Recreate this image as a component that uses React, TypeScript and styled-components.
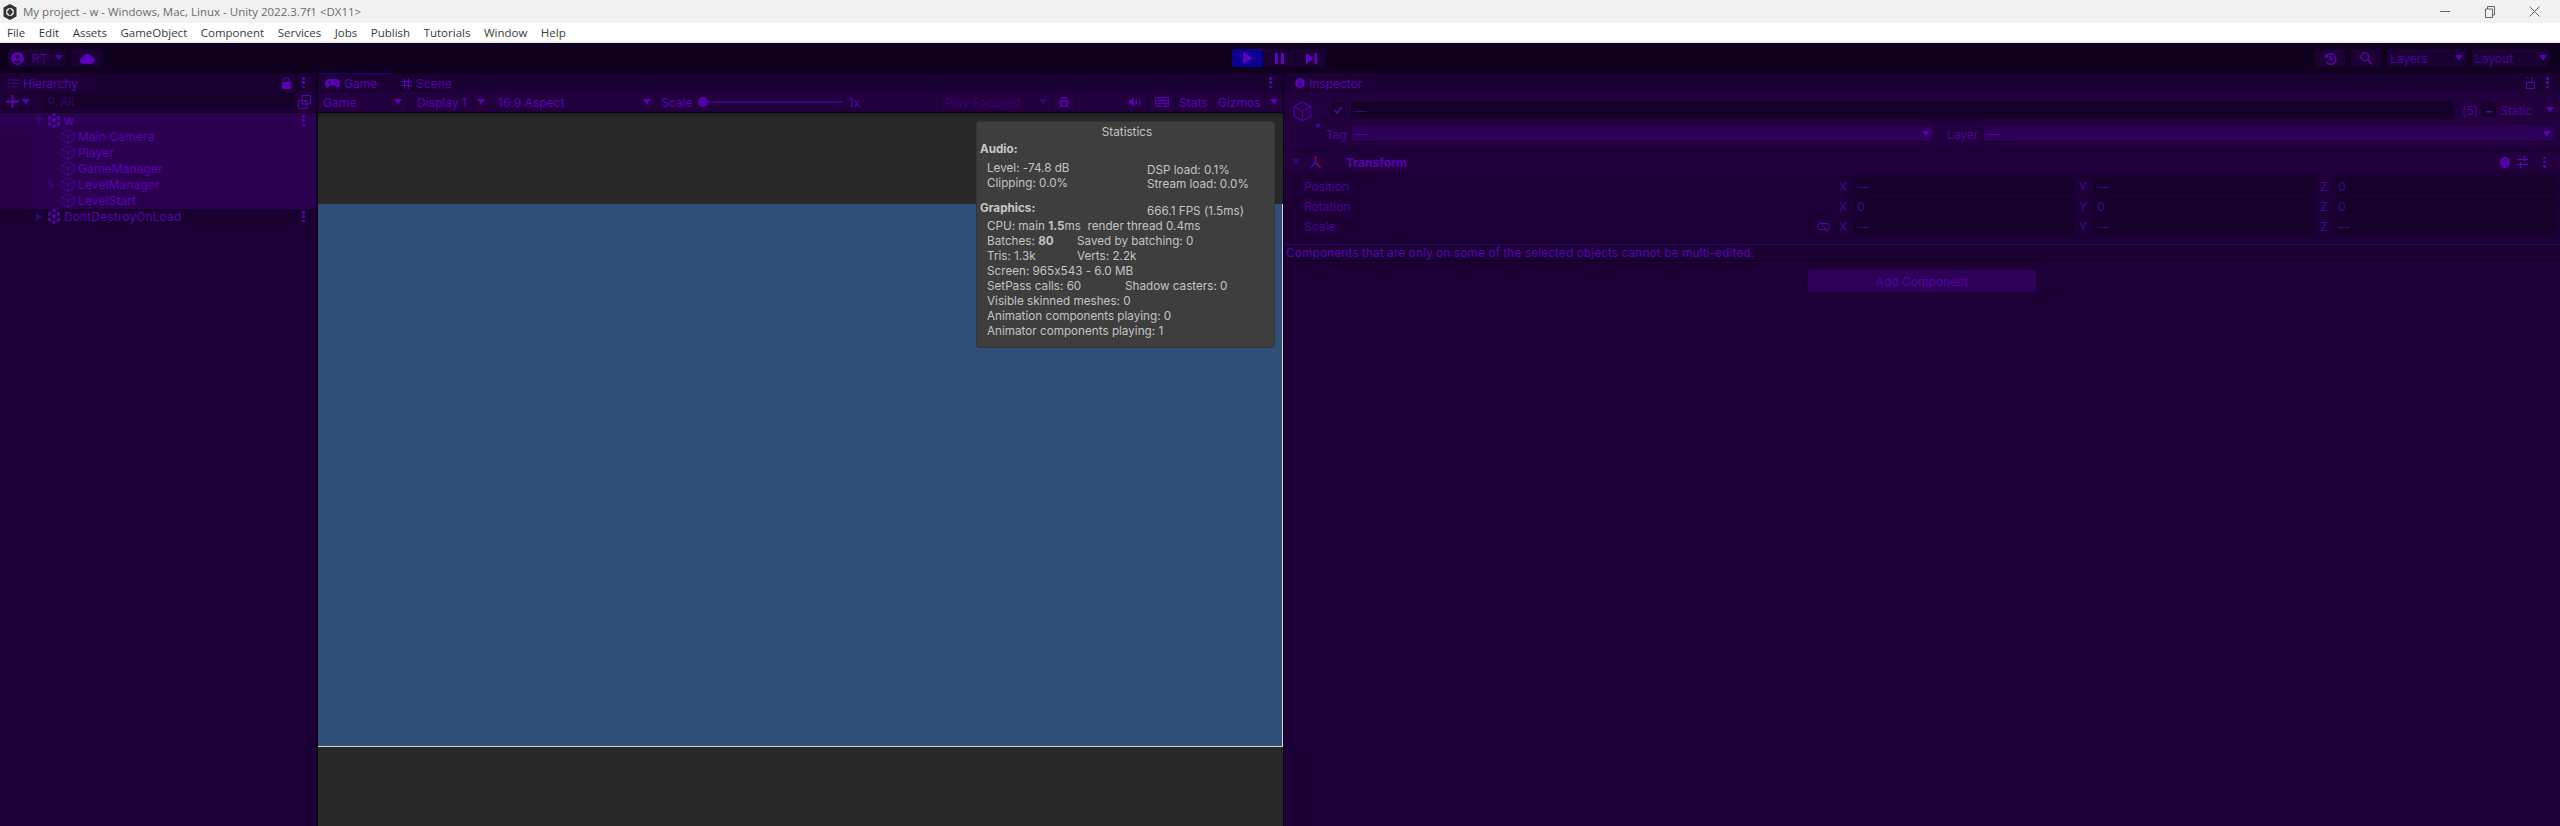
import React from "react";
import styled, { createGlobalStyle } from "styled-components";

const TEXT = "#5b00b6";
const DIM = "#4c009c";
const PANEL = "#1c0035";

const Global = createGlobalStyle`
  html, body { margin: 0; padding: 0; background: #10001f; }
  #root { width: 2560px; height: 826px; overflow: hidden; }
  * { box-sizing: border-box; }
`;

const Page = styled.div`
  width: 2560px; height: 826px; display: flex; flex-direction: column; overflow: hidden;
  font-family: Inter, "Liberation Sans", sans-serif; font-size: 12px; color: ${TEXT};
  font-feature-settings: "calt" 0;
`;
const TitleBar = styled.header`
  height: 23px; flex: none; background: #f2f2f2; display: flex; align-items: center; padding-left: 3px;
  font-family: "Open Sans", "Noto Sans", sans-serif; font-size: 11.5px; color: #6b6b6b;
`;
const TitleText = styled.span` margin-left: 6px; flex: 1; white-space: nowrap; `;
const WindowBtn = styled.span`
  width: 45px; height: 23px; display: flex; align-items: center; justify-content: center;
`;
const WindowBtns = styled.div` display: flex; margin-right: 3px; `;
const MenuBar = styled.nav`
  height: 20px; flex: none; background: #fff; border-bottom: 2px solid #f0f0f0; display: flex; align-items: center;
  padding-left: 7px; gap: 13.5px; font-family: "Open Sans", "Noto Sans", sans-serif; font-size: 11.5px; color: #3a3a3a;
`;
const MainToolbar = styled.div`
  height: 30px; flex: none; background: #0f001d; display: grid; grid-template-columns: 1fr auto 1fr; align-items: center;
  padding: 0 10px 0 8px;
`;
const ToolGroup = styled.div<{ $end?: boolean }>`
  display: flex; gap: 6px; align-items: center; justify-content: ${(p) => (p.$end ? "flex-end" : "flex-start")};
`;
const PlayGroup = styled.div` display: flex; gap: 1px; `;
const ToolBtn = styled.div<{ $w: number; $active?: boolean }>`
  width: ${(p) => p.$w}px; height: 18px; border-radius: 2px; display: flex; align-items: center; justify-content: center; gap: 5px;
  background: ${(p) => (p.$active ? "#0c0090" : "#1b0034")}; color: ${DIM};
`;
const ToolDrop = styled(ToolBtn)` justify-content: space-between; padding: 0 3px; `;
const Panels = styled.main`
  flex: 1; min-height: 0; display: flex; background: #0c0018;
`;
const Panel = styled.section<{ $w: number; $mr: number }>`
  width: ${(p) => p.$w}px; margin-right: ${(p) => p.$mr}px; flex: none; display: flex; flex-direction: column; background: ${PANEL};
`;
const TabStrip = styled.div`
  height: 19px; flex: none; background: #180030; display: flex; align-items: stretch; position: relative;
`;
const Tab = styled.div<{ $w: number; $pad?: number; $active?: boolean; $blue?: boolean }>`
  width: ${(p) => p.$w}px; display: flex; align-items: center; gap: 4px; padding-left: ${(p) => p.$pad ?? 7}px;
  background: ${(p) => (p.$active ? PANEL : "transparent")};
  border-top: 1px solid ${(p) => (p.$blue ? "#15008c" : "transparent")};
`;
const TabTools = styled.div`
  margin-left: auto; display: flex; align-items: center; gap: 11px; padding-right: 11px;
`;
const Bar = styled.div`
  height: 20.5px; flex: none; background: #22003e; border-bottom: 1px solid #12001f; display: flex; align-items: center;
`;
const HierBar = styled(Bar)` padding: 0 5px 0 6px; background: ${PANEL}; `;
const SearchField = styled.div`
  width: 251px; height: 15px; margin-left: 14px; background: #15002a; border-radius: 3px; display: flex; align-items: center; gap: 3px; padding-left: 4px; color: #3a0076;
`;
const Tree = styled.div` display: flex; flex-direction: column; `;
const TreeRow = styled.div<{ $kind: "scene" | "child" | "plain" }>`
  height: 16px; display: flex; align-items: center; padding-right: 11px; white-space: nowrap; position: relative;
  background: ${(p) =>
    p.$kind === "scene"
      ? "#2b0051"
      : p.$kind === "child"
      ? "linear-gradient(90deg,#27004a 32px,#2b0051 32px)"
      : "#190030"};
`;
const Caret = styled.span<{ $x: number; $open?: boolean }>`
  width: 0; height: 0; margin-left: ${(p) => p.$x}px; flex: none;
  ${(p) =>
    p.$open
      ? `border-left:4px solid transparent;border-right:4px solid transparent;border-top:7px solid #3b0077;`
      : `border-top:4px solid transparent;border-bottom:4px solid transparent;border-left:6px solid #3b0077;`}
`;
const Indent = styled.span<{ $x: number }>` width: ${(p) => p.$x}px; flex: none; `;
const RowName = styled.span<{ $bold?: boolean }>`
  margin-left: 3px; flex: 1; font-weight: ${(p) => (p.$bold ? 600 : 400)}; letter-spacing: .12px;
`;
const Game = styled.div` flex: 1; min-height: 0; background: #282828; position: relative; display: flex; flex-direction: column; `;
const Shade = styled.div` height: 91px; flex: none; background: linear-gradient(#1c1c1c 0, #282828 5px); `;
const GameImage = styled.div`
  height: 543px; flex: none; background: #2f4f78; border-right: 1px solid #d6d6d6; border-bottom: 1px solid #d6d6d6;
`;
const GBar = styled(Bar)` align-items: stretch; height: 21px; `;
const GItem = styled.div<{ $w: number; $pad?: number; $center?: boolean; $dim?: boolean }>`
  width: ${(p) => p.$w}px; flex: none; border-right: 1px solid #1a0030; display: flex; align-items: center;
  justify-content: ${(p) => (p.$center ? "center" : "space-between")}; padding: 0 ${(p) => p.$pad ?? 5}px;
  color: ${(p) => (p.$dim ? "#3b0078" : TEXT)}; white-space: nowrap;
`;
const SliderTrack = styled.span`
  flex: 1; height: 2px; background: #3a0076; margin: 0 6px 0 0; position: relative;
`;
const SliderKnob = styled.span`
  width: 10px; height: 10px; border-radius: 50%; background: #5500aa; margin: 0 0 0 6px; flex: none;
`;
const Stats = styled.aside`
  position: absolute; left: 658px; top: 8px; width: 299px; height: 227px; background: #3e3e3e; border-radius: 3px;
  border: 1px solid #343434; padding: 3px 0 0 3px; color: #c4c4c4; font-size: 11.7px; line-height: 15px;
`;
const StatTitle = styled.div` text-align: center; height: 15px; `;
const StatHeading = styled.div<{ $mt?: number }>` font-weight: 700; color: #c8c8c8; margin-top: ${(p) => p.$mt ?? 0}px; `;
const StatCols = styled.div<{ $mt: number; $h?: number }>` display: flex; margin-top: ${(p) => p.$mt}px; height: ${(p) => (p.$h ? `${p.$h}px` : "auto")}; `;
const StatLeft = styled.div` width: 167px; flex: none; `;
const StatRight = styled.div<{ $pt: number }>` padding-top: ${(p) => p.$pt}px; line-height: 14px; `;
const StatLine = styled.div` padding-left: 7px; display: flex; white-space: nowrap; `;
const StatCell = styled.span<{ $w: number }>` width: ${(p) => p.$w}px; flex: none; `;
const Insp = styled.div` display: flex; flex-direction: column; flex: 1; background: ${PANEL}; `;
const InspHead = styled.div`
  height: 59px; flex: none; background: #22003e; border-bottom: 1px solid #12001f; padding-top: 9px; display: flex; flex-direction: column; gap: 7px;
`;
const NameRow = styled.div` height: 18px; display: flex; align-items: center; padding-left: 9px; `;
const CubeSlot = styled.div` width: 38px; height: 18px; flex: none; position: relative; `;
const CubeArrow = styled.span`
  position: absolute; left: 22px; top: 23px; width: 0; height: 0;
  border-left: 3.5px solid transparent; border-right: 3.5px solid transparent; border-top: 5px solid ${DIM};
`;
const Check = styled.span`
  width: 14px; height: 14px; flex: none; background: #15002a; border-radius: 2px; display: flex; align-items: center; justify-content: center; font-size: 0;
`;
const NameField = styled.div`
  flex: 1; height: 18px; margin-left: 6px; background: #15002a; border-radius: 3px; color: #3a0076; padding-left: 3px; display: flex; align-items: center;
`;
const CountLabel = styled.span` width: 20px; margin-left: 8px; flex: none; color: ${DIM}; `;
const Dash = styled(Check)` color: ${TEXT}; font-size: 12px; font-weight: 700; `;
const StaticLabel = styled.span` margin-left: 4px; flex: none; width: 46px; color: ${DIM}; `;
const TagRow = styled.div` height: 16px; display: flex; align-items: center; padding-right: 6px; `;
const TagLabel = styled.span<{ $l: number; $w: number }>`
  margin-left: ${(p) => p.$l}px; width: ${(p) => p.$w}px; flex: none; color: ${DIM};
`;
const Select = styled.div<{ $w: number }>`
  width: ${(p) => p.$w}px; height: 16px; flex: none; background: #2d0057; border-radius: 2px; display: flex; align-items: center; justify-content: space-between; padding: 0 3px; border-bottom: 1px solid #1a0030;
`;
const CompHead = styled.div`
  height: 22px; flex: none; background: #22003e; border-bottom: 1px solid #1c0034; display: flex; align-items: center; padding: 1px 6px 0 0;
`;
const CompTitle = styled.span` margin-left: 24px; flex: 1; font-weight: 700; `;
const CompTools = styled.div` display: flex; gap: 7px; align-items: center; `;
const Vectors = styled.div` padding-top: 4px; display: flex; flex-direction: column; gap: 2px; height: 71px; flex: none; `;
const VRow = styled.div` height: 18px; display: flex; align-items: center; padding: 0 4px 0 20px; `;
const VLabel = styled.span` flex: 1; color: ${DIM}; `;
const LinkSlot = styled.span` width: 14px; margin-right: 8px; display: flex; `;
const Axis = styled.span` width: 15px; flex: none; color: ${DIM}; `;
const VField = styled.div<{ $w: number }>`
  width: ${(p) => p.$w}px; height: 18px; flex: none; background: #15002a; border-radius: 3px; padding-left: 3px; display: flex; align-items: center; color: #4a0096;
`;
const Notice = styled.div`
  height: 17px; flex: none; background: #1b0034; border-top: 1px solid #33006a; border-bottom: 1px solid #0c0018; padding-left: 2px; display: flex; align-items: center; white-space: nowrap; letter-spacing: .02px;
`;
const AddRow = styled.div` display: flex; justify-content: center; padding: 9px 0 0 0; `;
const AddBtn = styled.button`
  width: 228px; height: 22px; border: 0; border-radius: 2px; background: #2e0058; color: #5500ac; font: inherit;
`;
const DotsWrap = styled.span`
  width: 3px; height: 11px; display: flex; flex-direction: column; justify-content: space-between; flex: none;
`;
const DotMark = styled.i<{ $c?: string }>` width: 2.5px; height: 2.5px; border-radius: 50%; background: ${(p) => p.$c ?? TEXT}; display: block; `;

const Dots = ({ c }: { c?: string }) => (
  <DotsWrap><DotMark $c={c} /><DotMark $c={c} /><DotMark $c={c} /></DotsWrap>
);
const Tri = ({ c = TEXT, s = 8 }: { c?: string; s?: number }) => (
  <svg width={s} height={s * 0.7} viewBox="0 0 8 5.6"><path d="M0 0h8L4 5.6z" fill={c} /></svg>
);
const Cube = ({ s = 14, c = "#4c009c", w = 1 }: { s?: number; c?: string; w?: number }) => (
  <svg width={s} height={s * 1.1} viewBox="0 0 14 15.4" fill="none" stroke={c} strokeWidth={w}>
    <path d="M7 .8 13 4v7.4l-6 3.2-6-3.2V4zM1 4l6 3.4L13 4M7 7.4v7.2" />
  </svg>
);
const SceneIcon = () => (
  <svg width="14" height="15" viewBox="0 0 13 14" fill={TEXT}>
    <path d="M6.5 0 9 1.5 6.5 3 4 1.5zM1 3.500l2.500-1.200.3 3L1 7zM12 3.500 9.500 2.300l-.3 3L12 7zM1 8l2.700 1.500.3 3L1 11zM12 8 9.300 9.500l-.3 3L12 11zM6.500 14 4.500 12.800 6.500 10l2 2.800zM6.500 4.500 9 6.300 6.500 8.800 4 6.300z" />
  </svg>
);
const Logo = () => (
  <svg width="14" height="16" viewBox="0 0 14 16">
    <path d="M7 0 13.500 3.500v9L7 16 .5 12.500v-9z" fill="#333" />
    <circle cx="7" cy="8" r="4" fill="#ddd" />
    <path d="M7 4.500 10 8 7 11.500 4 8z" fill="#333" />
  </svg>
);
const Gamepad = () => (
  <svg width="15" height="9" viewBox="0 0 15 9" fill={TEXT}>
    <path d="M4 0h7a4 4 0 0 1 4 4.500c0 4-2.500 5-4.500 3L9.500 6.500h-4l-1 1c-2 2-4.500 1-4.500-3A4 4 0 0 1 4 0z" />
    <path d="M3 3.500h3M4.500 2v3M10 3h.8M11.500 4.500h.8" stroke={PANEL} strokeWidth="1" />
  </svg>
);
const Hash = () => (
  <svg width="11" height="11" viewBox="0 0 11 11" stroke={TEXT} strokeWidth="1" fill="none">
    <path d="M3.500 0v11M7.500 0v11M0 3.500h11M0 7.500h11" />
  </svg>
);
const ListIcon = () => (
  <svg width="11" height="9" viewBox="0 0 11 9" stroke={DIM} strokeWidth="1" fill="none">
    <path d="M0 1h2M3.500 1h7.500M0 4.500h2M3.500 4.500h7.500M0 8h2M3.500 8h7.500" />
  </svg>
);
const Lock = ({ open }: { open?: boolean }) => (
  <svg width="9" height="12" viewBox="0 0 9 12" fill={open ? "none" : TEXT} stroke={TEXT} strokeWidth="1">
    {open ? <path d="M1 1.500a2.500 2.500 0 0 1 5 0V5" /> : <path d="M2 5V3a2.500 2.500 0 0 1 5 0v2" fill="none" />}
    <rect x=".5" y="5.500" width="8" height="6" />
  </svg>
);
const Plus = () => (
  <svg width="13" height="13" viewBox="0 0 13 13" stroke={TEXT} strokeWidth="2"><path d="M6.500 0v13M0 6.500h13" /></svg>
);
const Mag = ({ c = "#3a0076", s = 9 }: { c?: string; s?: number }) => (
  <svg width={s} height={s} viewBox="0 0 12 12" fill="none" stroke={c} strokeWidth="1.400">
    <circle cx="4.500" cy="4.500" r="3.500" /><path d="M7 7l4.500 4.500" />
  </svg>
);
const Visibility = () => (
  <svg width="13" height="14" viewBox="0 0 13 14" fill="none" stroke={TEXT}>
    <path d="M4 .5h8.500V9H4zM.5 5.500H9V13.500H.5zM4 9l3-3M5.500 5.500H7.500V7.500" />
  </svg>
);
const Person = () => (
  <svg width="13" height="13" viewBox="0 0 13 13"><circle cx="6.500" cy="6.500" r="6.500" fill={TEXT} /><circle cx="6.500" cy="4.800" r="2" fill="#1b0034" /><path d="M2.800 10.200c1-2 6.400-2 7.400 0-1.500 1.400-5.900 1.400-7.400 0z" fill="#1b0034" /></svg>
);
const Cloud = () => (
  <svg width="15" height="11" viewBox="0 0 15 11" fill={TEXT}><path d="M3.500 11a3.500 3.500 0 0 1-.4-7A4.500 4.500 0 0 1 11.600 3.500 3.800 3.800 0 0 1 11.500 11z" /></svg>
);
const PlayIcon = () => (<svg width="10" height="12" viewBox="0 0 10 12" fill="#5f00c4"><path d="M0 0l10 6-10 6z" /></svg>);
const PauseIcon = () => (<svg width="9" height="11" viewBox="0 0 9 11" fill="#5f00c4"><path d="M0 0h3v11H0zM6 0h3v11H6z" /></svg>);
const StepIcon = () => (<svg width="11" height="11" viewBox="0 0 11 11" fill="#5f00c4"><path d="M0 0l8 5.500-8 5.500zM8.500 0h2.500v11H8.500z" /></svg>);
const History = () => (
  <svg width="13" height="13" viewBox="0 0 13 13" fill="none" stroke={TEXT} strokeWidth="1.500">
    <path d="M1.500 2v3h3M1.700 5a5.300 5.300 0 1 1 .2 4.500M6.500 3.500v3.300l2 1.200" />
  </svg>
);
const Bug = () => (
  <svg width="14" height="14" viewBox="0 0 14 14" fill={DIM}>
    <path d="M4 2h6l1 2H3zM3 5h8v7H3z" /><rect x="5.500" y="7" width="3" height="3" fill="#22003e" />
    <path d="M1 4l2 2M13 4l-2 2M0 8h3M14 8h-3M1 13l2-2M13 13l-2-2" stroke={DIM} fill="none" />
  </svg>
);
const Speaker = () => (
  <svg width="13" height="10" viewBox="0 0 13 10" fill={TEXT}>
    <path d="M0 3h2l3-3v10L2 7H0zM6.500 2l1.500 1v4l-1.500 1z" />
    <path d="M10 1.500c1.500 2 1.500 5 0 7" fill="none" stroke={TEXT} />
  </svg>
);
const Keyboard = () => (
  <svg width="14" height="10" viewBox="0 0 14 10" fill="none" stroke={TEXT}>
    <path d="M.5.500h13v9H.5zM.5 3.500h13M.5 6.500h13M3.500.5v3M6.500.5v3M9.500.5v3M5 3.500v3M8 3.500v3M11 3.500v3M3.500 6.500v3M10.500 6.500v3" strokeWidth=".9" />
  </svg>
);
const InfoIcon = () => (
  <svg width="10" height="10" viewBox="0 0 10 10"><circle cx="5" cy="5" r="5" fill={TEXT} /><path d="M5 2v1M5 4.300V8" stroke={PANEL} strokeWidth="1.500" /></svg>
);
const Axes = () => (
  <svg width="13" height="13" viewBox="0 0 13 13" fill="none" strokeWidth="1.600">
    <path d="M6.500 0v6" stroke="#8a0a3c" /><path d="M6.500 6.500 1.500 11.500" stroke="#1a10e0" /><path d="M6.500 6.500l5 5" stroke="#8a0a3c" />
  </svg>
);
const Help = () => (
  <svg width="10" height="11" viewBox="0 0 10 11"><ellipse cx="5" cy="5.500" rx="5" ry="5.500" fill={TEXT} /><path d="M3.500 4.200c0-2 3-2 3 0 0 1-1.500 1-1.500 2.300M5 7.800v1" stroke="#22003e" fill="none" /></svg>
);
const Sliders = () => (
  <svg width="11" height="12" viewBox="0 0 11 12" stroke={TEXT} fill="none" strokeWidth="1.200">
    <path d="M0 3.500h11M0 8.500h11M7.500 0v6M3.500 6v6" />
  </svg>
);
const LinkOff = () => (
  <svg width="13" height="11" viewBox="0 0 13 11" fill="none" stroke={TEXT}><rect x=".5" y="2.500" width="12" height="6" rx="3" /><path d="M2 0l9 11" /></svg>
);
const Min = () => <svg width="10" height="1"><path d="M0 .5h10" stroke="#666" /></svg>;
const Max = () => (
  <svg width="10" height="12" viewBox="0 0 10 12" fill="none" stroke="#666"><path d="M.5 3h7v8.500h-7zM2.500 3V.5h7V9H7.500" /></svg>
);
const Close = () => <svg width="11" height="11"><path d="M.5.5l10 10M10.500.5l-10 10" stroke="#666" /></svg>;

const menu = ["File", "Edit", "Assets", "GameObject", "Component", "Services", "Jobs", "Publish", "Tutorials", "Window", "Help"];
const children = ["Main Camera", "Player", "GameManager", "LevelManager", "LevelStart"];
const vectors = [
  { n: "Position", x: "—", y: "—", z: "0" },
  { n: "Rotation", x: "0", y: "0", z: "0" },
  { n: "Scale", x: "—", y: "—", z: "—", link: true },
];

export default function App() {
  return (
    <Page>
      <Global />
      <TitleBar>
        <Logo />
        <TitleText>My project - w - Windows, Mac, Linux - Unity 2022.3.7f1 &lt;DX11&gt;</TitleText>
        <WindowBtns>
          <WindowBtn><Min /></WindowBtn>
          <WindowBtn><Max /></WindowBtn>
          <WindowBtn><Close /></WindowBtn>
        </WindowBtns>
      </TitleBar>
      <MenuBar>{menu.map((m) => <span key={m}>{m}</span>)}</MenuBar>
      <MainToolbar>
        <ToolGroup>
          <ToolDrop $w={58}><Person /><span>RT</span><Tri c={DIM} /></ToolDrop>
          <ToolBtn $w={30}><Cloud /></ToolBtn>
        </ToolGroup>
        <PlayGroup>
          <ToolBtn $w={31} $active><PlayIcon /></ToolBtn>
          <ToolBtn $w={31}><PauseIcon /></ToolBtn>
          <ToolBtn $w={30}><StepIcon /></ToolBtn>
        </PlayGroup>
        <ToolGroup $end>
          <ToolBtn $w={30}><History /></ToolBtn>
          <ToolBtn $w={30}><Mag c={TEXT} s={13} /></ToolBtn>
          <ToolDrop $w={79}><span>Layers</span><Tri /></ToolDrop>
          <ToolDrop $w={78}><span>Layout</span><Tri /></ToolDrop>
        </ToolGroup>
      </MainToolbar>
      <Panels>
        <Panel $w={316} $mr={2}>
          <TabStrip>
            <Tab $w={95} $active $pad={8}><ListIcon /><span>Hierarchy</span></Tab>
            <TabTools><Lock /><Dots /></TabTools>
          </TabStrip>
          <HierBar>
            <Plus /><Indent $x={3} /><Tri />
            <SearchField><Mag /><span>All</span></SearchField>
            <Indent $x={3} /><Visibility />
          </HierBar>
          <Tree>
            <TreeRow $kind="scene">
              <Caret $x={35} $open /><Indent $x={4} /><SceneIcon /><RowName $bold>w</RowName><Dots />
            </TreeRow>
            {children.map((c) => (
              <TreeRow $kind="child" key={c}>
                {c === "LevelManager" ? <><Caret $x={49} /><Indent $x={6} /></> : <Indent $x={61} />}
                <Cube /><RowName>{c}</RowName>
              </TreeRow>
            ))}
            <TreeRow $kind="plain">
              <Caret $x={36} /><Indent $x={5} /><SceneIcon /><RowName>DontDestroyOnLoad</RowName><Dots />
            </TreeRow>
          </Tree>
        </Panel>
        <Panel $w={965} $mr={1}>
          <TabStrip>
            <Tab $w={73} $active $blue><Gamepad /><span>Game</span></Tab>
            <Tab $w={70} $pad={10}><Hash /><span>Scene</span></Tab>
            <TabTools><Dots /></TabTools>
          </TabStrip>
          <GBar>
            <GItem $w={90}><span>Game</span><Tri /></GItem>
            <GItem $w={87} $pad={9}><span>Display 1</span><Tri /></GItem>
            <GItem $w={160} $pad={3}><span>16:9 Aspect</span><Tri /></GItem>
            <GItem $w={286} $pad={6}>
              <span>Scale</span><SliderKnob /><SliderTrack /><span>1x</span><Indent $x={74} />
            </GItem>
            <GItem $w={111} $dim $pad={4}><span>Play Focused</span><Tri c="#3b0078" /></GItem>
            <GItem $w={25} $center $pad={0}><Bug /></GItem>
            <GItem $w={46} $pad={0} />
            <GItem $w={26} $center $pad={0}><Speaker /></GItem>
            <GItem $w={27} $center $pad={0}><Keyboard /></GItem>
            <GItem $w={38} $pad={3}><span>Stats</span></GItem>
            <GItem $w={52} $pad={4}><span>Gizmos</span></GItem>
            <GItem $w={17} $center $pad={0}><Tri /></GItem>
          </GBar>
          <Game>
            <Shade />
            <GameImage />
            <Stats>
              <StatTitle>Statistics</StatTitle>
              <StatHeading $mt={2}>Audio:</StatHeading>
              <StatCols $mt={4}>
                <StatLeft>
                  <StatLine>Level: -74.8 dB</StatLine>
                  <StatLine>Clipping: 0.0%</StatLine>
                </StatLeft>
                <StatRight $pt={2}>
                  <div>DSP load: 0.1%</div>
                  <div>Stream load: 0.0%</div>
                </StatRight>
              </StatCols>
              <StatCols $mt={10} $h={18}>
                <StatLeft><StatHeading>Graphics:</StatHeading></StatLeft>
                <StatRight $pt={3}>666.1 FPS (1.5ms)</StatRight>
              </StatCols>
              <StatLine>CPU: main&nbsp;<b>1.5</b>ms&nbsp; render thread 0.4ms</StatLine>
              <StatLine><StatCell $w={90}>Batches: <b>80</b></StatCell>Saved by batching: 0</StatLine>
              <StatLine><StatCell $w={90}>Tris: 1.3k</StatCell>Verts: 2.2k</StatLine>
              <StatLine>Screen: 965x543 - 6.0 MB</StatLine>
              <StatLine><StatCell $w={138}>SetPass calls: 60</StatCell>Shadow casters: 0</StatLine>
              <StatLine>Visible skinned meshes: 0</StatLine>
              <StatLine>Animation components playing: 0</StatLine>
              <StatLine>Animator components playing: 1</StatLine>
            </Stats>
          </Game>
        </Panel>
        <Panel $w={1276} $mr={0}>
          <TabStrip>
            <Indent $x={1} />
            <Tab $w={93} $active $pad={10}><InfoIcon /><span>Inspector</span></Tab>
            <TabTools><Lock open /><Dots /></TabTools>
          </TabStrip>
          <Insp>
            <InspHead>
              <NameRow>
                <CubeSlot><Cube s={19} c={DIM} /><CubeArrow /></CubeSlot>
                <Check><svg width="10" height="8" viewBox="0 0 10 8" fill="none" stroke="#5f00c4" strokeWidth="1.500"><path d="M1 4l3 3 5-6" /></svg></Check>
                <NameField>—</NameField>
                <CountLabel>(5)</CountLabel>
                <Dash>−</Dash>
                <StaticLabel>Static</StaticLabel>
                <Tri /><Indent $x={6} />
              </NameRow>
              <TagRow>
                <TagLabel $l={42} $w={26}>Tag</TagLabel>
                <Select $w={581}><span>—</span><Tri /></Select>
                <TagLabel $l={14} $w={37}>Layer</TagLabel>
                <Select $w={570}><span>—</span><Tri /></Select>
              </TagRow>
            </InspHead>
            <CompHead>
              <Caret $x={8} $open /><Indent $x={9} /><Axes />
              <CompTitle>Transform</CompTitle>
              <CompTools><Help /><Sliders /><Indent $x={1} /><Dots /><Indent $x={1} /></CompTools>
            </CompHead>
            <Vectors>
              {vectors.map((v) => (
                <VRow key={v.n}>
                  <VLabel>{v.n}</VLabel>
                  {v.link && <LinkSlot><LinkOff /></LinkSlot>}
                  <Axis>X</Axis><VField $w={220}>{v.x}</VField>
                  <Indent $x={5} />
                  <Axis>Y</Axis><VField $w={221}>{v.y}</VField>
                  <Indent $x={5} />
                  <Axis>Z</Axis><VField $w={221}>{v.z}</VField>
                </VRow>
              ))}
            </Vectors>
            <Notice>Components that are only on some of the selected objects cannot be multi-edited.</Notice>
            <AddRow><AddBtn>Add Component</AddBtn></AddRow>
          </Insp>
        </Panel>
      </Panels>
    </Page>
  );
}
